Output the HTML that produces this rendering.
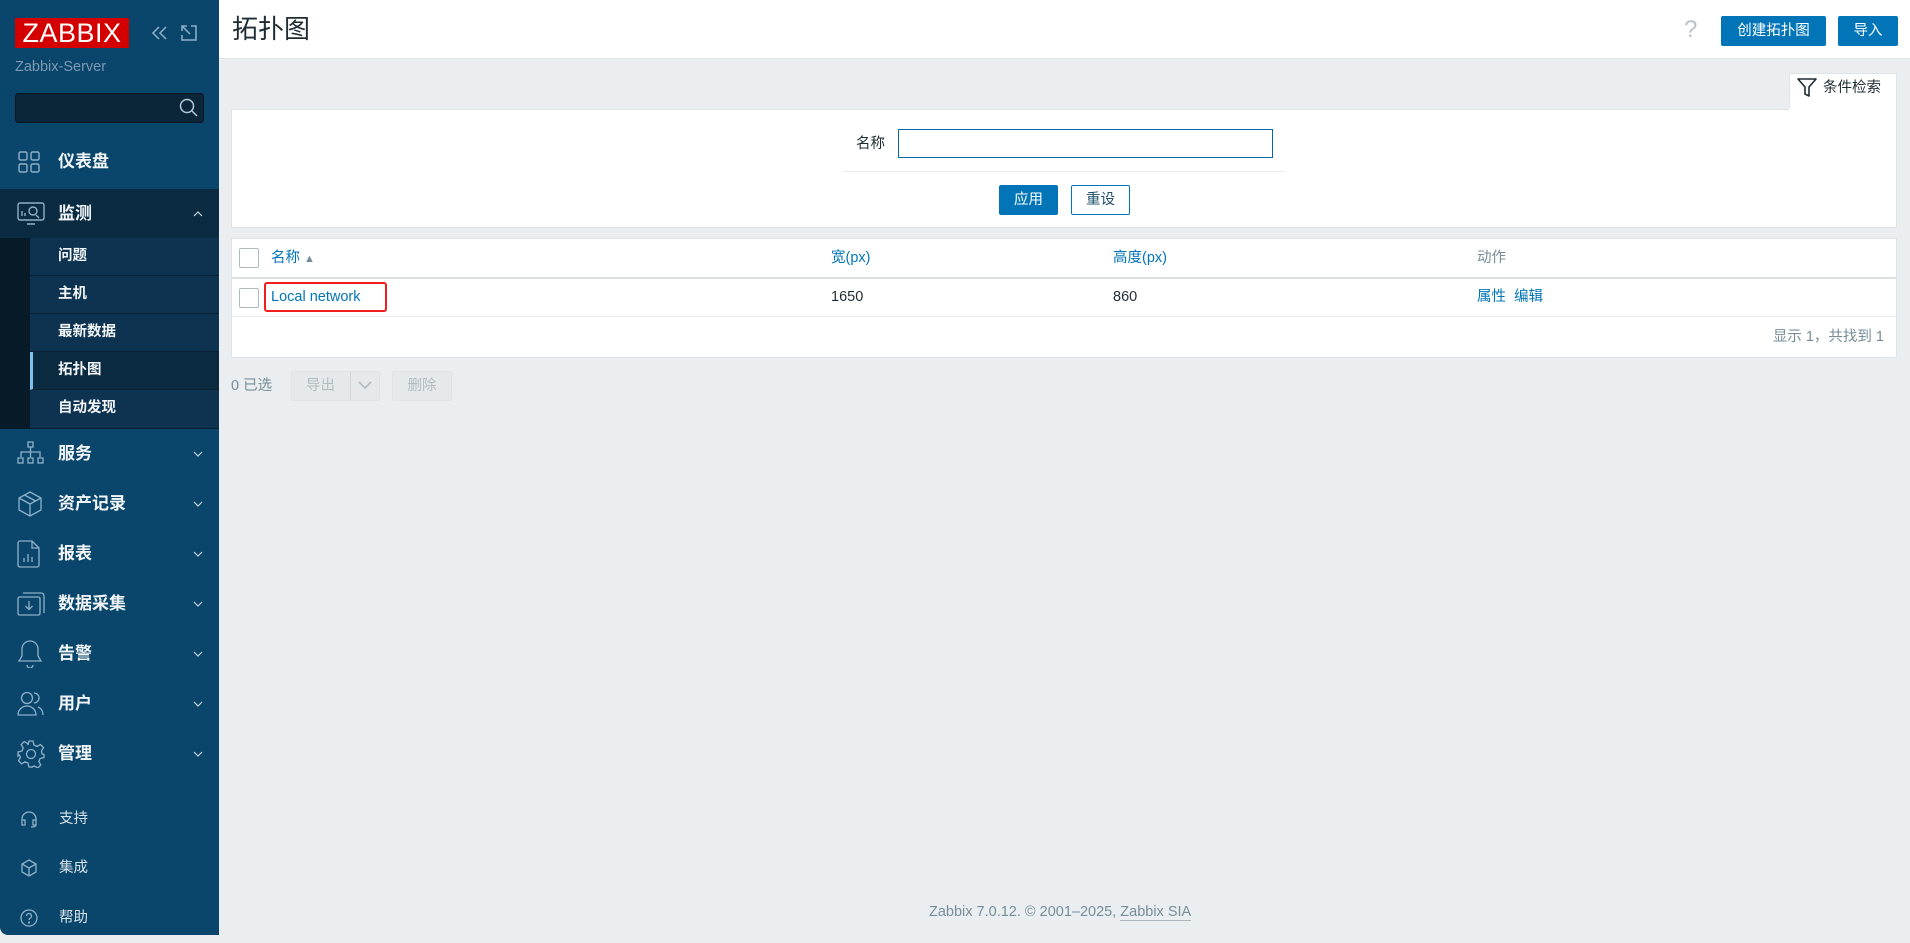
<!DOCTYPE html>
<html><head><meta charset="utf-8"><style>
*{box-sizing:border-box;margin:0;padding:0}
body{width:1910px;height:935px;overflow:hidden;background:#ebeef0;font-family:"Liberation Sans","Noto Sans CJK SC",sans-serif;position:relative;color:#1f2c33}
.a{position:absolute}
.t{line-height:20px;height:20px;white-space:nowrap}
#sb{left:0;top:0;width:219px;height:935px;background:#0a466b;border-radius:0 0 0 8px}
.mi{position:absolute;left:0;width:219px;height:50px;color:#f2f6f8;font-size:17px;font-weight:bold;line-height:50px}
.mi span{position:absolute;left:58px;top:0}
.mi svg{position:absolute;left:17px;top:50%;transform:translateY(-50%)}
.mi .ch{position:absolute;left:193px}
.sub{position:absolute;left:30px;width:189px;height:38px;line-height:37px;color:#f2f6f8;font-size:14.5px;font-weight:bold;border-bottom:1px solid #0a2233;background:#0e3350}
.sub span{position:absolute;left:28px;top:0}
.low{position:absolute;left:0;width:219px;height:50px;line-height:50px;color:#d8e2e9;font-size:14.5px}
.low span{position:absolute;left:59px;top:0}
.low svg{position:absolute;left:20px;top:50%;transform:translateY(-50%)}
.btn{position:absolute;background:#0275b8;color:#fff;font-size:14.5px;border-radius:2px;text-align:center}
.cb{position:absolute;width:20px;height:20px;border:1px solid #acbbc2;background:#fff;border-radius:2px}
.lnk{color:#0275b8}
</style></head><body>
<div id="sb" class="a">
  <div class="a" style="left:15px;top:18px;width:114px;height:30px;background:#d40000;color:#fff;font-size:27px;line-height:30px;text-align:center;letter-spacing:0.5px">ZABBIX</div>
  <svg class="a" style="left:150px;top:24px" width="20" height="18" viewBox="0 0 20 18"><path d="M9 3 3 9l6 6M16 3l-6 6 6 6" fill="none" stroke="#8fb1c8" stroke-width="1.5"/></svg>
  <svg class="a" style="left:180px;top:24px" width="18" height="18" viewBox="0 0 18 18"><path d="M2 7V2h5M2 2l8 8M11 2h5v14H2v-5" fill="none" stroke="#8fb1c8" stroke-width="1.5"/></svg>
  <div class="a t" style="left:15px;top:57px;color:#7d9ab0;font-size:14.5px">Zabbix-Server</div>
  <div class="a" style="left:15px;top:93px;width:189px;height:30px;background:#0a2638;border:1px solid #051521;border-radius:3px"></div>
  <svg class="a" style="left:178px;top:97px" width="22" height="22" viewBox="0 0 22 22"><circle cx="9" cy="9" r="6.5" fill="none" stroke="#b5c9d6" stroke-width="1.5"/><path d="M14 14l5 5" stroke="#b5c9d6" stroke-width="1.5"/></svg>

  <div class="mi" style="top:137px"><svg width="24" height="24" viewBox="0 0 24 24" fill="none" stroke="#8fb1c8" stroke-width="1.4"><rect x="2" y="2" width="8" height="8" rx="1.5"/><rect x="14" y="2" width="8" height="8" rx="1.5"/><rect x="2" y="14" width="8" height="8" rx="1.5"/><rect x="14" y="14" width="8" height="8" rx="1.5"/></svg><span>仪表盘</span></div>
  <div class="mi" style="top:189px;height:49px;line-height:49px;background:#0a2b42"><svg width="28" height="24" viewBox="0 0 28 24" fill="none" stroke="#8fb1c8" stroke-width="1.4"><rect x="1" y="1" width="26" height="17" rx="2"/><path d="M10 22h8M5 14V9M8 14v-3M19 13l3 3"/><circle cx="16" cy="9" r="4"/></svg><span>监测</span><svg class="ch" width="10" height="6" viewBox="0 0 10 6"><path d="M1 5l4-4 4 4" fill="none" stroke="#c5d5df" stroke-width="1.2"/></svg></div>
  <div class="a" style="left:0;top:238px;width:30px;height:191px;background:#061a28"></div>
  <div class="sub" style="top:238px"><span>问题</span></div>
  <div class="sub" style="top:276px"><span>主机</span></div>
  <div class="sub" style="top:314px"><span>最新数据</span></div>
  <div class="sub" style="top:352px;background:#0a2a40;border-left:3px solid #7fc1ec"><span style="left:25px">拓扑图</span></div>
  <div class="sub" style="top:390px;height:39px"><span>自动发现</span></div>

  <div class="mi" style="top:429px"><svg width="28" height="26" viewBox="0 0 28 26" fill="none" stroke="#8fb1c8" stroke-width="1.3"><rect x="11" y="1" width="5" height="5"/><path d="M13.5 6v5M4 16v-5h19v5M13.5 11v5"/><rect x="1" y="17" width="5" height="5"/><rect x="11" y="17" width="5" height="5"/><rect x="21" y="17" width="5" height="5"/></svg><span>服务</span><svg class="ch" width="10" height="6" viewBox="0 0 10 6"><path d="M1 1l4 4 4-4" fill="none" stroke="#c5d5df" stroke-width="1.2"/></svg></div>
  <div class="mi" style="top:479px"><svg width="26" height="26" viewBox="0 0 26 26" fill="none" stroke="#8fb1c8" stroke-width="1.3"><path d="M13 1l11 6v12l-11 6-11-6V7zM2 7l11 6 11-6M13 13v12M7.5 4l11 6"/></svg><span>资产记录</span><svg class="ch" width="10" height="6" viewBox="0 0 10 6"><path d="M1 1l4 4 4-4" fill="none" stroke="#c5d5df" stroke-width="1.2"/></svg></div>
  <div class="mi" style="top:529px"><svg width="24" height="28" viewBox="0 0 24 28" fill="none" stroke="#8fb1c8" stroke-width="1.3"><path d="M3 1h12l7 7v17a2 2 0 0 1-2 2H3a2 2 0 0 1-2-2V3a2 2 0 0 1 2-2zM15 1v7h7M7 22v-4M11 22v-8M15 22v-5"/></svg><span>报表</span><svg class="ch" width="10" height="6" viewBox="0 0 10 6"><path d="M1 1l4 4 4-4" fill="none" stroke="#c5d5df" stroke-width="1.2"/></svg></div>
  <div class="mi" style="top:579px"><svg width="28" height="24" viewBox="0 0 28 24" fill="none" stroke="#8fb1c8" stroke-width="1.3"><rect x="1" y="5" width="22" height="18" rx="1.5"/><path d="M6 1h18a3 3 0 0 1 3 3v17M12 9v8M8.5 14l3.5 3.5 3.5-3.5"/></svg><span>数据采集</span><svg class="ch" width="10" height="6" viewBox="0 0 10 6"><path d="M1 1l4 4 4-4" fill="none" stroke="#c5d5df" stroke-width="1.2"/></svg></div>
  <div class="mi" style="top:629px"><svg width="26" height="28" viewBox="0 0 26 28" fill="none" stroke="#8fb1c8" stroke-width="1.3"><path d="M13 1a8 8 0 0 1 8 8v7l3 5H2l3-5V9a8 8 0 0 1 8-8zM10 25a3 3 0 0 0 6 0"/></svg><span>告警</span><svg class="ch" width="10" height="6" viewBox="0 0 10 6"><path d="M1 1l4 4 4-4" fill="none" stroke="#c5d5df" stroke-width="1.2"/></svg></div>
  <div class="mi" style="top:679px"><svg width="28" height="26" viewBox="0 0 28 26" fill="none" stroke="#8fb1c8" stroke-width="1.3"><circle cx="10" cy="7" r="5.5"/><path d="M1 24c0-5 4-9 9-9s9 4 9 9zM17 2a5 5 0 0 1 0 10M21 16c3 1 5 4 5 8"/></svg><span>用户</span><svg class="ch" width="10" height="6" viewBox="0 0 10 6"><path d="M1 1l4 4 4-4" fill="none" stroke="#c5d5df" stroke-width="1.2"/></svg></div>
  <div class="mi" style="top:729px"><svg width="28" height="28" viewBox="0 0 28 28" fill="none" stroke="#8fb1c8" stroke-width="1.3"><circle cx="14" cy="14" r="4.5"/><path d="M12 1h4l1 4 3 1.5 3.5-2 3 3-2 3.5L25 14l2 .5v3l-4 1-1.2 3 2 3.5-3 3-3.5-2-3 1.2L16 27h-4l-1-4-3-1.2-3.5 2-3-3 2-3.5L2.3 15 1 16v-4l4-1 1.2-3-2-3.5 3-3 3.5 2L11 5z"/></svg><span>管理</span><svg class="ch" width="10" height="6" viewBox="0 0 10 6"><path d="M1 1l4 4 4-4" fill="none" stroke="#c5d5df" stroke-width="1.2"/></svg></div>

  <div class="low" style="top:794px"><svg width="18" height="18" viewBox="0 0 18 18" fill="none" stroke="#8fb1c8" stroke-width="1.3"><path d="M2 12V9a7 7 0 0 1 14 0v3M2 10h3v5H2zM13 10h3v5h-3zM16 15c0 2-3 2-5 2"/></svg><span>支持</span></div>
  <div class="low" style="top:843px"><svg width="18" height="18" viewBox="0 0 18 18" fill="none" stroke="#8fb1c8" stroke-width="1.3"><path d="M9 1l7 4v8l-7 4-7-4V5zM2 5l7 4 7-4M9 9v8"/></svg><span>集成</span></div>
  <div class="low" style="top:893px"><svg width="18" height="18" viewBox="0 0 18 18" fill="none" stroke="#8fb1c8" stroke-width="1.3"><circle cx="9" cy="9" r="8"/><path d="M6.5 7a2.5 2.5 0 1 1 3.5 2.3c-.7.3-1 .8-1 1.5V11"/><circle cx="9" cy="13.5" r=".5"/></svg><span>帮助</span></div>
</div>

<!-- header -->
<div class="a" style="left:219px;top:0;width:1691px;height:59px;background:#fff;border-bottom:1px solid #dfe4e7"></div>
<div class="a" style="left:232px;top:13px;font-size:26px;line-height:32px;color:#1f2c33">拓扑图</div>
<div class="a" style="left:1684px;top:16px;font-size:24px;line-height:28px;color:#b8c3c9">?</div>
<div class="btn" style="left:1721px;top:16px;width:105px;height:30px;line-height:30px">创建拓扑图</div>
<div class="btn" style="left:1838px;top:16px;width:60px;height:30px;line-height:30px">导入</div>

<!-- filter -->
<div class="a" style="left:1789px;top:73px;width:108px;height:40px;background:#fff;border:1px solid #dfe4e7;border-bottom:none"></div>
<svg class="a" style="left:1796px;top:77px" width="22" height="22" viewBox="0 0 22 22"><path d="M2 2h18l-7 8v9l-4-2v-7z" fill="none" stroke="#1f2c33" stroke-width="1.6" stroke-linejoin="round"/></svg>
<div class="a t" style="left:1823px;top:78px;font-size:14.5px;color:#1f2c33">条件检索</div>
<div class="a" style="left:231px;top:109px;width:1666px;height:119px;background:#fff;border:1px solid #dfe4e7"></div>
<div class="a" style="left:1789px;top:108px;width:107px;height:3px;background:#fff"></div>
<div class="a t" style="left:856px;top:134px;font-size:14.5px">名称</div>
<div class="a" style="left:898px;top:129px;width:375px;height:29px;border:1px solid #0568a6;background:#fff"></div>
<div class="a" style="left:843px;top:171px;width:443px;height:1px;background:#ebeef0"></div>
<div class="btn" style="left:999px;top:185px;width:59px;height:30px;line-height:30px">应用</div>
<div class="a" style="left:1071px;top:185px;width:59px;height:30px;line-height:28px;border:1px solid #0275b8;border-radius:2px;color:#1f4d6b;text-align:center;font-size:14.5px;background:#fff">重设</div>

<!-- table -->
<div class="a" style="left:231px;top:238px;width:1666px;height:120px;background:#fff;border:1px solid #dfe4e7"></div>
<div class="a" style="left:232px;top:277px;width:1664px;height:2px;background:#dbe0e3"></div>
<div class="a" style="left:232px;top:316px;width:1664px;height:1px;background:#ebeef0"></div>
<div class="cb" style="left:239px;top:248px"></div>
<div class="cb" style="left:239px;top:288px"></div>
<div class="a t lnk" style="left:271px;top:248px;font-size:14.5px">名称 <span style="font-size:11px;color:#768d99">▲</span></div>
<div class="a t lnk" style="left:831px;top:248px;font-size:14.5px">宽(px)</div>
<div class="a t lnk" style="left:1113px;top:248px;font-size:14.5px">高度(px)</div>
<div class="a t" style="left:1477px;top:248px;font-size:14.5px;color:#768d99">动作</div>
<div class="a" style="left:264px;top:282px;width:123px;height:30px;border:2.5px solid #f21d1d;border-radius:3px"></div>
<div class="a t lnk" style="left:271px;top:287px;font-size:14.5px">Local network</div>
<div class="a t" style="left:831px;top:287px;font-size:14.5px">1650</div>
<div class="a t" style="left:1113px;top:287px;font-size:14.5px">860</div>
<div class="a t lnk" style="left:1477px;top:287px;font-size:14.5px">属性&nbsp; 编辑</div>
<div class="a t" style="right:26px;top:327px;font-size:14.5px;color:#768d99">显示 1，共找到 1</div>

<!-- actions -->
<div class="a t" style="left:231px;top:376px;font-size:14.5px;color:#768d99">0 已选</div>
<div class="a" style="left:291px;top:371px;width:89px;height:30px;border:1px solid #dfe4e7;background:#e6e9eb;border-radius:2px"></div>
<div class="a" style="left:350px;top:372px;width:1px;height:28px;background:#d2d8dc"></div>
<div class="a t" style="left:306px;top:376px;font-size:14.5px;color:#b0bcc2">导出</div>
<svg class="a" style="left:358px;top:381px" width="14" height="9" viewBox="0 0 14 9"><path d="M1 1l6 6 6-6" fill="none" stroke="#b0bcc2" stroke-width="1.6"/></svg>
<div class="a" style="left:392px;top:371px;width:60px;height:30px;border:1px solid #dfe4e7;background:#e6e9eb;border-radius:2px;text-align:center;line-height:28px;font-size:14.5px;color:#b0bcc2">删除</div>

<div class="a t" style="left:929px;top:902px;font-size:14.5px;color:#768d99">Zabbix 7.0.12. © 2001–2025, <span style="border-bottom:1px solid #aab6bd">Zabbix SIA</span></div>
</body></html>
